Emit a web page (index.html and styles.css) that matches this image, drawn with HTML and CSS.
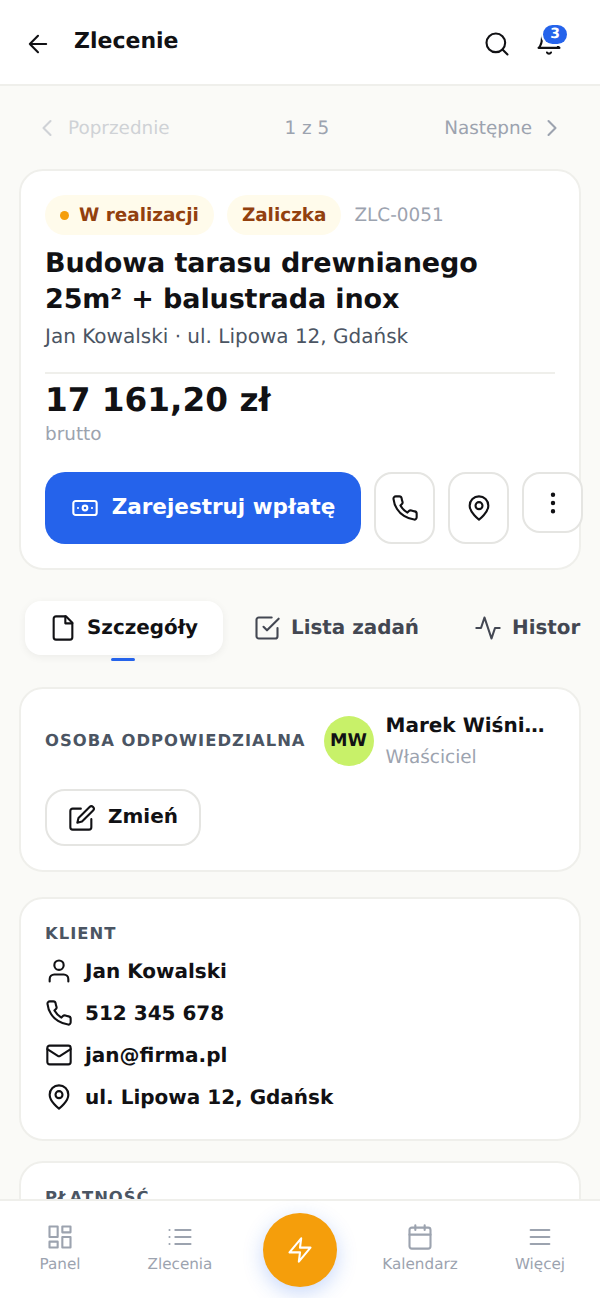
FILE: index.html
```html
<!DOCTYPE html>
<html lang="pl">
<head>
    <meta charset="UTF-8">
    <meta name="viewport" content="width=device-width, initial-scale=1.0">
    <title>Zlecenie</title>
    <link rel="stylesheet" href="styles.css">
</head>
<body>
    <svg class="sprite" aria-hidden="true">
        <symbol id="i-back" viewBox="0 0 24 24"><path d="M19 12H5M12 19l-7-7 7-7"/></symbol>
        <symbol id="i-search" viewBox="0 0 24 24"><circle cx="11" cy="11" r="8"/><path d="m21 21-4.3-4.3"/></symbol>
        <symbol id="i-bell" viewBox="0 0 24 24"><path d="M6 8a6 6 0 0 1 12 0c0 7 3 9 3 9H3s3-2 3-9"/><path d="M10.3 21a1.94 1.94 0 0 0 3.4 0"/></symbol>
        <symbol id="i-left" viewBox="0 0 24 24"><path d="m15 18-6-6 6-6"/></symbol>
        <symbol id="i-right" viewBox="0 0 24 24"><path d="m9 18 6-6-6-6"/></symbol>
        <symbol id="i-money" viewBox="0 0 24 24"><rect x="2" y="6" width="20" height="12" rx="2"/><circle cx="12" cy="12" r="2"/><path d="M6 12h.01M18 12h.01"/></symbol>
        <symbol id="i-phone" viewBox="0 0 24 24"><path d="M22 16.92v3a2 2 0 0 1-2.18 2 19.79 19.79 0 0 1-8.63-3.07 19.5 19.5 0 0 1-6-6 19.79 19.79 0 0 1-3.07-8.67A2 2 0 0 1 4.11 2h3a2 2 0 0 1 2 1.72 12.84 12.84 0 0 0 .7 2.81 2 2 0 0 1-.45 2.11L8.09 9.91a16 16 0 0 0 6 6l1.27-1.27a2 2 0 0 1 2.11-.45 12.84 12.84 0 0 0 2.81.7A2 2 0 0 1 22 16.92z"/></symbol>
        <symbol id="i-pin" viewBox="0 0 24 24"><path d="M20 10c0 6-8 12-8 12s-8-6-8-12a8 8 0 0 1 16 0Z"/><circle cx="12" cy="10" r="3"/></symbol>
        <symbol id="i-more" viewBox="0 0 24 24"><circle cx="12" cy="5" r="1"/><circle cx="12" cy="12" r="1"/><circle cx="12" cy="19" r="1"/></symbol>
        <symbol id="i-file" viewBox="0 0 24 24"><path d="M14.5 2H6a2 2 0 0 0-2 2v16a2 2 0 0 0 2 2h12a2 2 0 0 0 2-2V7.5L14.5 2z"/><path d="M14 2v6h6"/></symbol>
        <symbol id="i-check" viewBox="0 0 24 24"><path d="m9 11 3 3L22 4"/><path d="M21 12v7a2 2 0 0 1-2 2H5a2 2 0 0 1-2-2V5a2 2 0 0 1 2-2h11"/></symbol>
        <symbol id="i-activity" viewBox="0 0 24 24"><path d="M22 12h-4l-3 9L9 3l-3 9H2"/></symbol>
        <symbol id="i-edit" viewBox="0 0 24 24"><path d="M11 4H4a2 2 0 0 0-2 2v14a2 2 0 0 0 2 2h14a2 2 0 0 0 2-2v-7"/><path d="M18.5 2.5a2.121 2.121 0 0 1 3 3L12 15l-4 1 1-4 9.5-9.5z"/></symbol>
        <symbol id="i-user" viewBox="0 0 24 24"><path d="M20 21v-2a4 4 0 0 0-4-4H8a4 4 0 0 0-4 4v2"/><circle cx="12" cy="7" r="4"/></symbol>
        <symbol id="i-mail" viewBox="0 0 24 24"><rect x="2" y="4" width="20" height="16" rx="2"/><path d="m22 7-8.97 5.7a1.94 1.94 0 0 1-2.06 0L2 7"/></symbol>
        <symbol id="i-panel" viewBox="0 0 24 24"><rect x="3" y="3" width="7" height="9"/><rect x="14" y="3" width="7" height="5"/><rect x="14" y="12" width="7" height="9"/><rect x="3" y="16" width="7" height="5"/></symbol>
        <symbol id="i-list" viewBox="0 0 24 24"><path d="M8 6h13M8 12h13M8 18h13M3 6h.01M3 12h.01M3 18h.01"/></symbol>
        <symbol id="i-calendar" viewBox="0 0 24 24"><rect x="3" y="4" width="18" height="18" rx="2"/><path d="M16 2v4M8 2v4M3 10h18"/></symbol>
        <symbol id="i-menu" viewBox="0 0 24 24"><path d="M4 6h16M4 12h16M4 18h16"/></symbol>
        <symbol id="i-zap" viewBox="0 0 24 24"><path d="M13 2 3 14h9l-1 8 10-12h-9l1-8z"/></symbol>
    </svg>

    <div class="screen">
        <header class="topbar">
            <svg class="icon back"><use href="#i-back"/></svg>
            <h1>Zlecenie</h1>
            <svg class="icon search"><use href="#i-search"/></svg>
            <div class="bell">
                <svg class="icon"><use href="#i-bell"/></svg>
                <span class="bell-badge">3</span>
            </div>
        </header>

        <main class="content">
            <nav class="pager">
                <div class="pager-link disabled">
                    <svg class="icon"><use href="#i-left"/></svg>
                    <span>Poprzednie</span>
                </div>
                <span class="pager-count">1 z 5</span>
                <div class="pager-link">
                    <span>Następne</span>
                    <svg class="icon"><use href="#i-right"/></svg>
                </div>
            </nav>

            <section class="card summary">
                <div class="tags">
                    <span class="pill"><i class="dot"></i>W realizacji</span>
                    <span class="pill">Zaliczka</span>
                    <span class="order-no">ZLC-0051</span>
                </div>
                <h2>Budowa tarasu drewnianego 25m² + balustrada inox</h2>
                <p class="summary-sub">Jan Kowalski · ul. Lipowa 12, Gdańsk</p>
                <div class="price">17 161,20 zł</div>
                <div class="price-note">brutto</div>
                <div class="actions">
                    <button class="btn-primary">
                        <svg class="icon"><use href="#i-money"/></svg>
                        <span>Zarejestruj wpłatę</span>
                    </button>
                    <button class="btn-square"><svg class="icon"><use href="#i-phone"/></svg></button>
                    <button class="btn-square"><svg class="icon"><use href="#i-pin"/></svg></button>
                    <button class="btn-square short"><svg class="icon"><use href="#i-more"/></svg></button>
                </div>
            </section>

            <div class="tabs">
                <div class="tab active">
                    <svg class="icon"><use href="#i-file"/></svg>
                    <span>Szczegóły</span>
                </div>
                <div class="tab">
                    <svg class="icon"><use href="#i-check"/></svg>
                    <span>Lista zadań</span>
                </div>
                <div class="tab">
                    <svg class="icon"><use href="#i-activity"/></svg>
                    <span>Historia</span>
                </div>
            </div>

            <section class="card owner">
                <div class="owner-row">
                    <div class="label">OSOBA ODPOWIEDZIALNA</div>
                    <div class="avatar">MW</div>
                    <div class="owner-text">
                        <div class="owner-name">Marek Wiśniewski</div>
                        <div class="owner-role">Właściciel</div>
                    </div>
                </div>
                <button class="btn-change">
                    <svg class="icon"><use href="#i-edit"/></svg>
                    <span>Zmień</span>
                </button>
            </section>

            <section class="card client">
                <div class="label">KLIENT</div>
                <div class="client-row"><svg class="icon"><use href="#i-user"/></svg>Jan Kowalski</div>
                <div class="client-row"><svg class="icon"><use href="#i-phone"/></svg>512 345 678</div>
                <div class="client-row"><svg class="icon"><use href="#i-mail"/></svg>jan@firma.pl</div>
                <div class="client-row"><svg class="icon"><use href="#i-pin"/></svg>ul. Lipowa 12, Gdańsk</div>
            </section>

            <section class="card payment">
                <div class="label">PŁATNOŚĆ</div>
            </section>
        </main>

        <nav class="bottom-nav">
            <div class="nav-item"><svg class="icon"><use href="#i-panel"/></svg>Panel</div>
            <div class="nav-item"><svg class="icon"><use href="#i-list"/></svg>Zlecenia</div>
            <div class="nav-item">
                <div class="fab"><svg class="icon"><use href="#i-zap"/></svg></div>
            </div>
            <div class="nav-item"><svg class="icon"><use href="#i-calendar"/></svg>Kalendarz</div>
            <div class="nav-item"><svg class="icon"><use href="#i-menu"/></svg>Więcej</div>
        </nav>
    </div>
</body>
</html>
```

FILE: styles.css
```css
* {
    box-sizing: border-box;
}

html, body {
    margin: 0;
    padding: 0;
}

body {
    font-family: "DejaVu Sans", sans-serif;
    background: #fafaf7;
    color: #111114;
    text-rendering: geometricPrecision;
}

.sprite {
    display: none;
}

.icon {
    width: 28px;
    height: 28px;
    flex: none;
    fill: none;
    stroke: currentColor;
    stroke-width: 1.8;
    stroke-linecap: round;
    stroke-linejoin: round;
}

.screen {
    position: relative;
    width: 600px;
    height: 1298px;
    overflow: hidden;
}

/* top bar */
.topbar {
    display: flex;
    align-items: center;
    height: 86px;
    padding: 4px 37px 0 24px;
    background: #fff;
    border-bottom: 2px solid #efefeb;
}

.topbar h1 {
    flex: 1;
    margin: -6px 0 0 22px;
    font-size: 22px;
    font-weight: 700;
}

.search {
    margin-right: 24px;
}

.bell {
    position: relative;
    width: 28px;
    height: 28px;
    margin-top: -4px;
}

.bell-badge {
    position: absolute;
    top: -3px;
    left: 8px;
    width: 24px;
    height: 19px;
    border-radius: 10px;
    background: #2563eb;
    box-shadow: 0 0 0 2px #fff;
    color: #fff;
    font-size: 14px;
    font-weight: 700;
    line-height: 18px;
    text-align: center;
}

/* content */
.content {
    padding: 0 19px;
}

.pager {
    display: flex;
    align-items: center;
    justify-content: space-between;
    height: 83px;
    padding: 2px 15px 0 14px;
    color: #9ca3af;
    font-size: 18.4px;
}

.pager-link {
    display: flex;
    align-items: center;
    gap: 6px;
}

.pager-link.disabled {
    gap: 7px;
    opacity: 0.45;
}

.pager-link .icon {
    margin-top: -1px;
}

.card {
    background: #fff;
    border: 2px solid #efefeb;
    border-radius: 24px;
}

.summary {
    height: 401px;
    padding: 24px;
}

.tags {
    display: flex;
    align-items: center;
    gap: 13px;
}

.pill {
    display: flex;
    align-items: center;
    height: 40px;
    padding: 0 15px;
    border-radius: 20px;
    background: #fffbeb;
    color: #92400e;
    font-size: 18.4px;
    font-weight: 700;
}

.dot {
    width: 9px;
    height: 9px;
    margin-right: 10px;
    border-radius: 50%;
    background: #f59e0b;
}

.order-no {
    color: #9ca3af;
    font-size: 18.4px;
}

.summary h2 {
    margin: 11px 0 0;
    font-size: 27px;
    line-height: 35.5px;
    letter-spacing: -0.12px;
    font-weight: 700;
}

.summary-sub {
    margin: 5px 0 0;
    padding-bottom: 22px;
    border-bottom: 2px solid #efefeb;
    color: #4b5563;
    font-size: 20px;
    line-height: 28px;
}

.price {
    margin-top: 4px;
    font-size: 32.7px;
    line-height: 44px;
    font-weight: 700;
}

.price-note {
    margin-top: 2px;
    color: #9ca3af;
    font-size: 18.4px;
    line-height: 22px;
}

.actions {
    display: flex;
    align-items: flex-start;
    gap: 13px;
    margin-top: 26px;
}

.actions button {
    flex: none;
    font-family: inherit;
}

.btn-primary {
    display: flex;
    align-items: center;
    justify-content: center;
    gap: 13px;
    width: 316px;
    height: 72px;
    border: 0;
    border-radius: 20px;
    background: #2563eb;
    color: #fff;
    font-size: 21.5px;
    font-weight: 700;
}

.btn-primary span {
    margin-top: -3px;
}

.btn-square {
    display: flex;
    align-items: center;
    justify-content: center;
    width: 61px;
    height: 72px;
    padding: 0;
    border: 2px solid #e5e5e2;
    border-radius: 18px;
    background: #fff;
    color: #111114;
}

.btn-square.short {
    height: 61px;
}

/* tabs */
.tabs {
    display: flex;
    gap: 6px;
    height: 117px;
    padding: 31px 0 0 6px;
    overflow: hidden;
}

.tab {
    display: flex;
    align-items: center;
    flex: none;
    gap: 10px;
    height: 54px;
    padding: 0 25px 0 24px;
    border-radius: 16px;
    color: #434752;
    font-size: 19.9px;
    font-weight: 700;
}

.tab span {
    margin-top: -2px;
}

.tab.active {
    position: relative;
    background: #fff;
    color: #111114;
    box-shadow: 0 2px 8px rgba(0, 0, 0, 0.06);
}

.tab.active::after {
    content: '';
    position: absolute;
    left: 86px;
    bottom: -6px;
    width: 24px;
    height: 3px;
    border-radius: 2px;
    background: #2563eb;
}

.label {
    color: #4b5563;
    font-size: 16.4px;
    font-weight: 700;
    letter-spacing: 1px;
}

.owner {
    height: 185px;
    margin-bottom: 25px;
    padding: 27px 24px 0;
}

.owner-row {
    display: flex;
    align-items: center;
    height: 50px;
    margin-bottom: 23px;
}

.owner-row .label {
    margin-top: -2px;
}

.avatar {
    display: flex;
    align-items: center;
    justify-content: center;
    flex: none;
    width: 50px;
    height: 50px;
    margin: 0 12px 0 18px;
    border-radius: 50%;
    background: #c8f169;
    font-size: 17.6px;
    font-weight: 700;
}

.owner-text {
    min-width: 0;
    flex: 1;
}

.owner-name {
    overflow: hidden;
    font-size: 20px;
    font-weight: 700;
    line-height: 26px;
    white-space: nowrap;
    text-overflow: ellipsis;
}

.owner-role {
    margin-top: 8px;
    color: #9ca3af;
    font-size: 18.4px;
    line-height: 24px;
}

.btn-change {
    display: flex;
    align-items: center;
    gap: 12px;
    width: 156px;
    height: 57px;
    padding: 0 21px;
    border: 2px solid #e5e5e2;
    border-radius: 20px;
    background: #fff;
    color: #111114;
    font-family: inherit;
    font-size: 20px;
    font-weight: 700;
}

.btn-change span {
    margin-top: -3px;
}

.client {
    height: 244px;
    margin-bottom: 20px;
    padding: 25px 24px 0;
}

.client .label {
    margin-bottom: 6px;
    line-height: 20px;
}

.client-row {
    display: flex;
    align-items: center;
    gap: 12px;
    height: 42px;
    font-size: 20px;
    font-weight: 700;
}

.payment {
    height: 200px;
    padding: 25px 24px;
}

/* bottom nav */
.bottom-nav {
    position: absolute;
    left: 0;
    right: 0;
    bottom: 0;
    display: grid;
    grid-template-columns: repeat(5, 120px);
    height: 99px;
    background: #fff;
    border-top: 2px solid #efefeb;
}

.nav-item {
    display: flex;
    flex-direction: column;
    align-items: center;
    gap: 4px;
    padding-top: 22px;
    color: #9ca3af;
    font-size: 15.2px;
}

.fab {
    display: flex;
    align-items: center;
    justify-content: center;
    width: 74px;
    height: 74px;
    margin-top: -10px;
    border-radius: 50%;
    background: #f59e0b;
    color: #fff;
    box-shadow: 0 6px 20px rgba(37, 99, 235, 0.25);
}
```
